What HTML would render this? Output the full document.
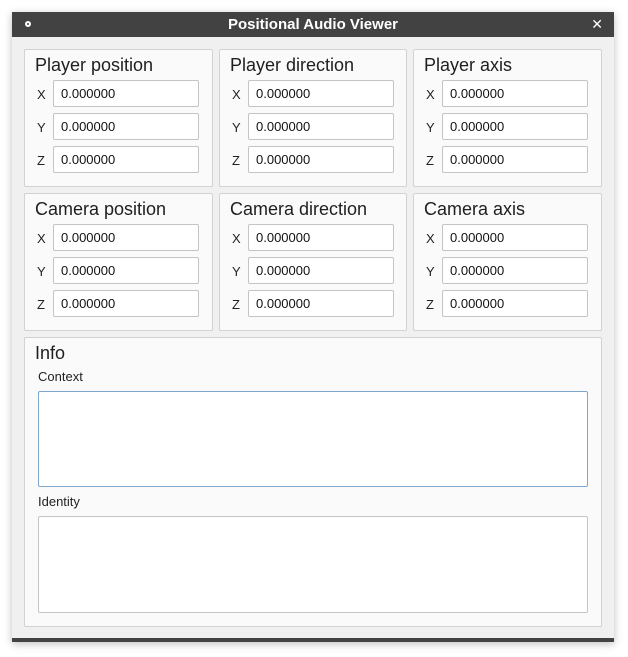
<!DOCTYPE html>
<html><head><style>
*{margin:0;padding:0;box-sizing:border-box}
body{width:628px;height:657px;background:#fff;font-family:"Liberation Sans","DejaVu Sans",sans-serif;position:relative;overflow:hidden}
.win{position:absolute;left:12px;top:12px;width:602px;height:630px;background:#f0f0f0;box-shadow:0 2px 8px rgba(0,0,0,.25)}
.tb{position:absolute;left:0;top:0;width:602px;height:25px;background:#424242;color:#fff;font-weight:bold;font-size:15px;text-align:center;line-height:25px}
.bb{position:absolute;left:0;bottom:0;width:602px;height:4px;background:#424242}
.g{position:absolute;background:#fafafa;border:1px solid #d2d2d2;border-radius:2px}
.gt{position:absolute;left:10px;top:5px;font-size:18px;color:#202020}
.l{position:absolute;left:12px;font-size:13px;color:#222}
.i{position:absolute;left:28px;width:146px;height:27px;background:#fff;border:1px solid #c4c4c4;border-radius:2px;font-size:13px;padding-left:7px;line-height:25px;color:#111}
.ta{position:absolute;left:13px;width:550px;background:#fff;border:1px solid #c4c4c4;border-radius:2px}
</style></head><body>
<div class="win">
<div class="tb">Positional Audio Viewer
<span style="position:absolute;left:13px;top:9px;width:6px;height:6px;border:2px solid #fff;border-radius:50%"></span>
<span style="position:absolute;right:11px;top:0;font-size:14px">✕</span></div>

<div class="g" style="left:12px;top:37px;width:189px;height:138px"><div class="gt">Player position</div>
<div class="l" style="top:37px">X</div><div class="i" style="top:30px">0.000000</div>
<div class="l" style="top:70px">Y</div><div class="i" style="top:63px">0.000000</div>
<div class="l" style="top:103px">Z</div><div class="i" style="top:96px">0.000000</div></div>
<div class="g" style="left:207px;top:37px;width:188px;height:138px"><div class="gt">Player direction</div>
<div class="l" style="top:37px">X</div><div class="i" style="top:30px">0.000000</div>
<div class="l" style="top:70px">Y</div><div class="i" style="top:63px">0.000000</div>
<div class="l" style="top:103px">Z</div><div class="i" style="top:96px">0.000000</div></div>
<div class="g" style="left:401px;top:37px;width:189px;height:138px"><div class="gt">Player axis</div>
<div class="l" style="top:37px">X</div><div class="i" style="top:30px">0.000000</div>
<div class="l" style="top:70px">Y</div><div class="i" style="top:63px">0.000000</div>
<div class="l" style="top:103px">Z</div><div class="i" style="top:96px">0.000000</div></div>

<div class="g" style="left:12px;top:181px;width:189px;height:138px"><div class="gt">Camera position</div>
<div class="l" style="top:37px">X</div><div class="i" style="top:30px">0.000000</div>
<div class="l" style="top:70px">Y</div><div class="i" style="top:63px">0.000000</div>
<div class="l" style="top:103px">Z</div><div class="i" style="top:96px">0.000000</div></div>
<div class="g" style="left:207px;top:181px;width:188px;height:138px"><div class="gt">Camera direction</div>
<div class="l" style="top:37px">X</div><div class="i" style="top:30px">0.000000</div>
<div class="l" style="top:70px">Y</div><div class="i" style="top:63px">0.000000</div>
<div class="l" style="top:103px">Z</div><div class="i" style="top:96px">0.000000</div></div>
<div class="g" style="left:401px;top:181px;width:189px;height:138px"><div class="gt">Camera axis</div>
<div class="l" style="top:37px">X</div><div class="i" style="top:30px">0.000000</div>
<div class="l" style="top:70px">Y</div><div class="i" style="top:63px">0.000000</div>
<div class="l" style="top:103px">Z</div><div class="i" style="top:96px">0.000000</div></div>

<div class="g" style="left:12px;top:325px;width:578px;height:290px"><div class="gt">Info</div>
<div class="l" style="top:31px;left:13px">Context</div>
<div class="ta" style="top:53px;height:96px;border-color:#7ea6cf"></div>
<div class="l" style="top:156px;left:13px">Identity</div>
<div class="ta" style="top:178px;height:97px"></div></div>
<div class="bb"></div>
</div>
</body></html>
